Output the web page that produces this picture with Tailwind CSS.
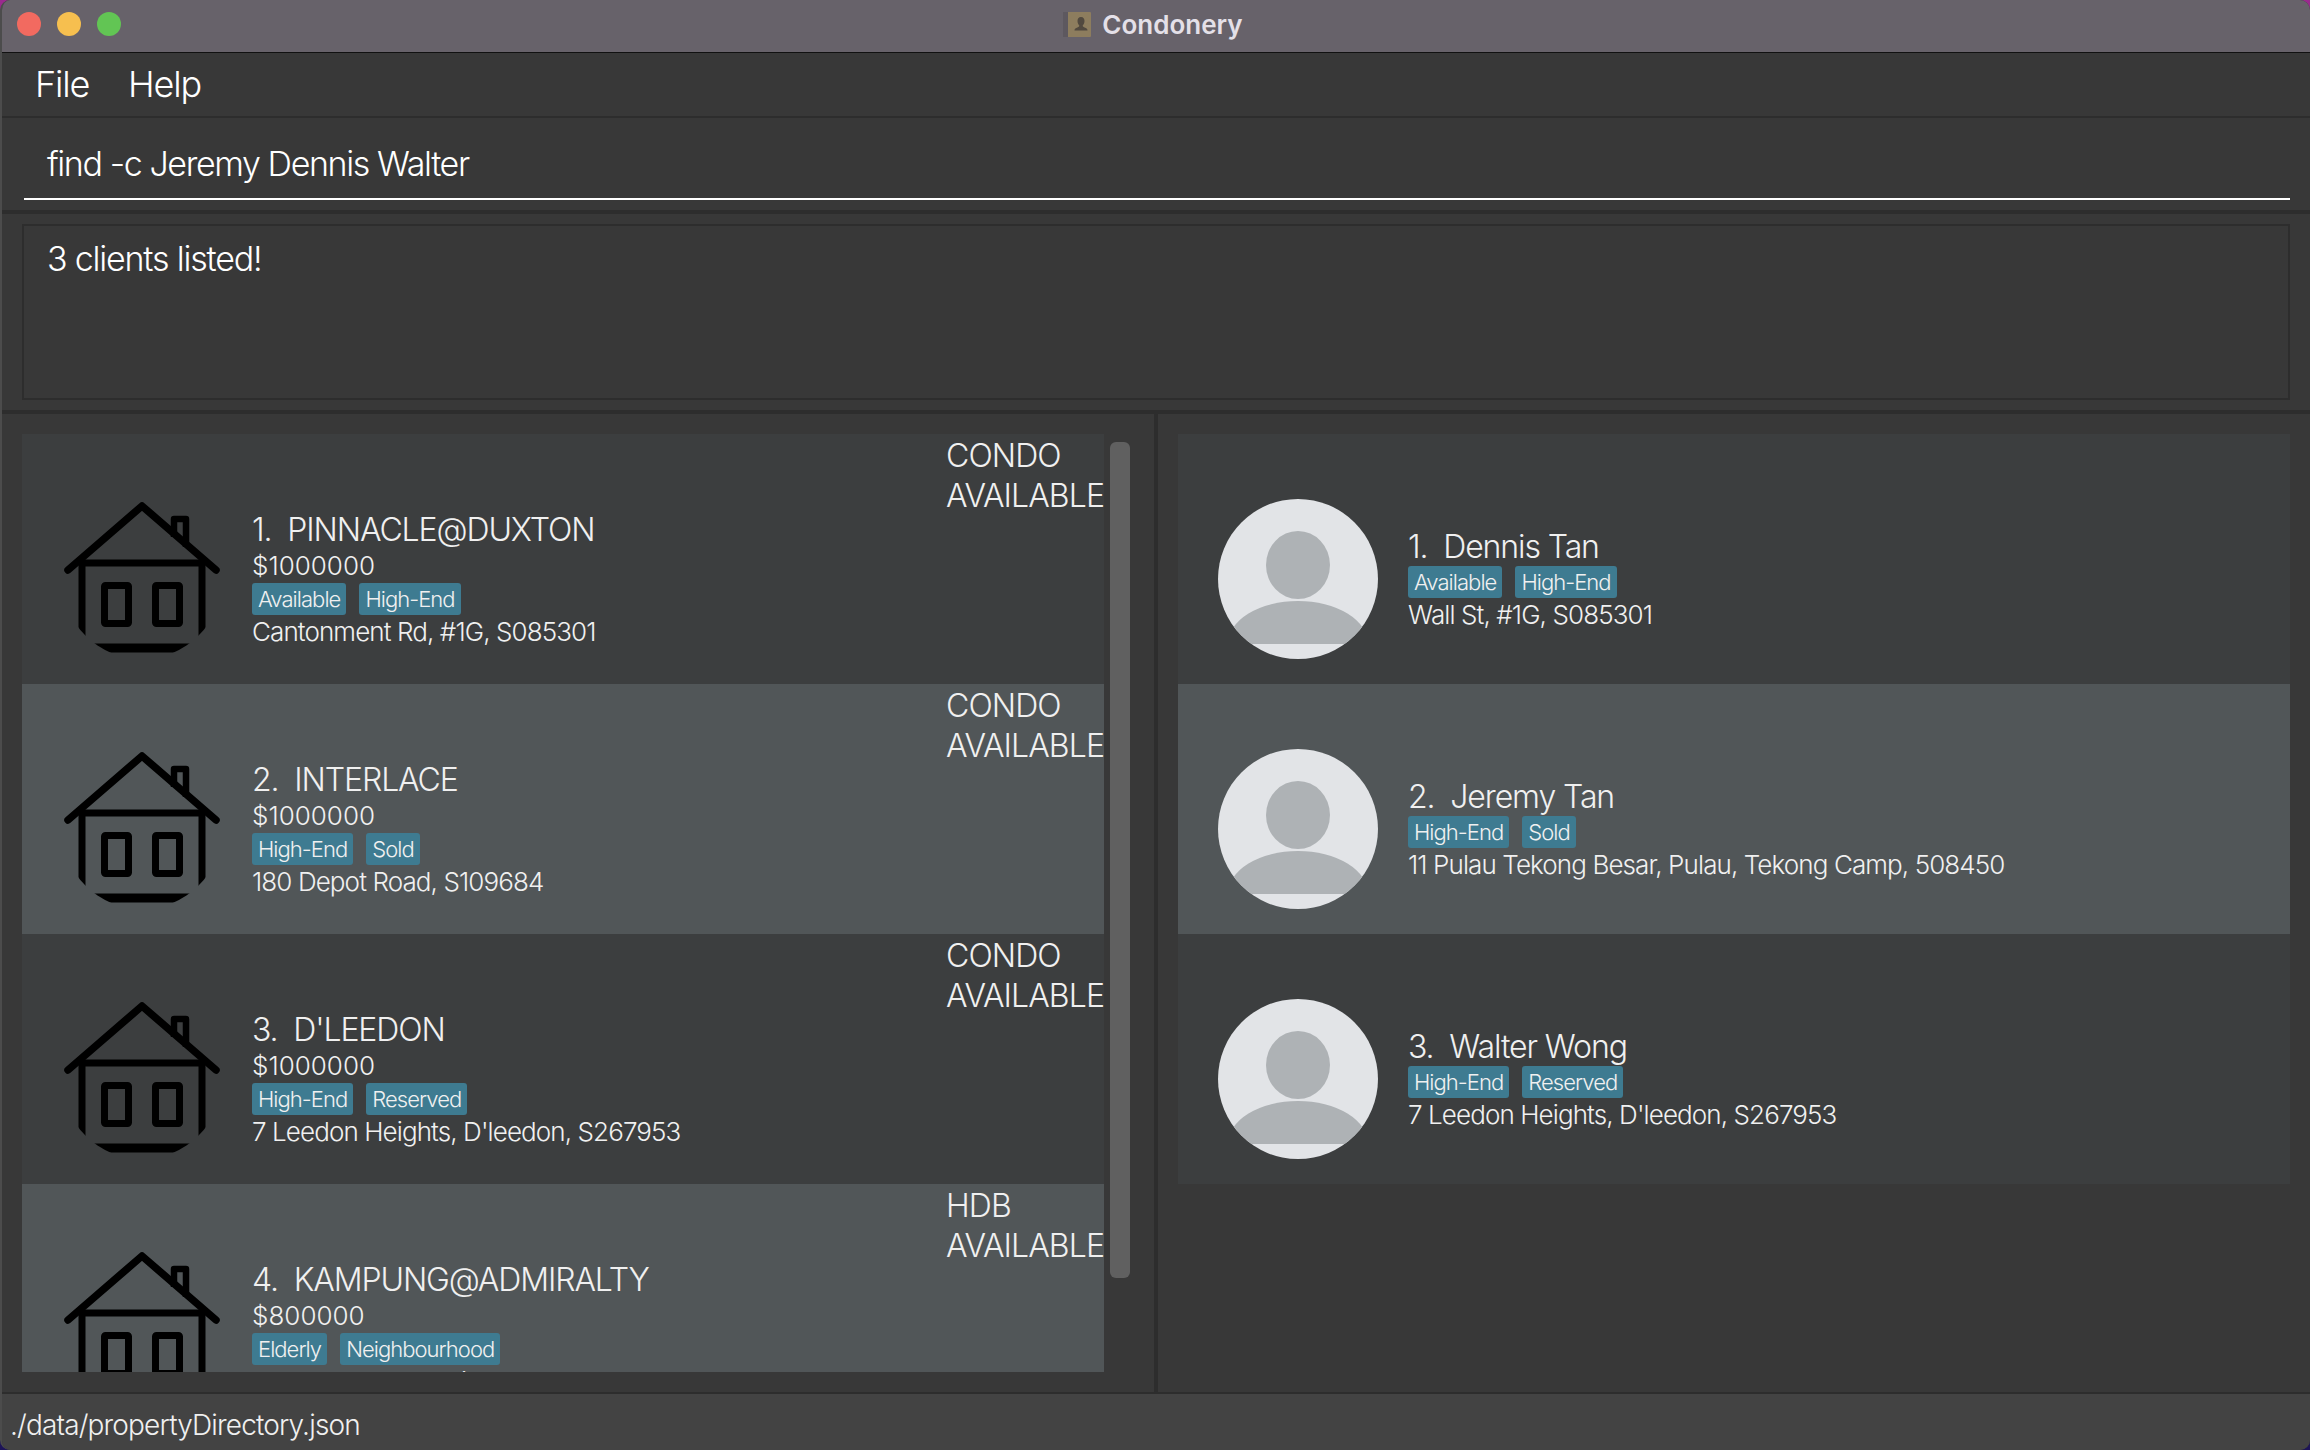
<!DOCTYPE html>
<html lang="en">
<head>
  <meta charset="UTF-8" />
  <title>Condonery</title>
  <script src="https://cdn.jsdelivr.net/npm/@tailwindcss/browser@4"></script>
</head>
<body class="h-[1450px] w-[2310px] overflow-hidden bg-linear-to-b from-[#9a2a8e] to-[#1d1458] font-['Inter','Noto_Sans',sans-serif] text-[#f0f0f0]">

  <svg class="absolute size-0">
    <defs>
      <clipPath id="round"><circle cx="80" cy="80" r="80"/></clipPath>
      <symbol id="house" viewBox="0 0 160 160">
        <g clip-path="url(#round)" fill="none" stroke="#000" stroke-width="7">
          <path d="M6 71 L80 7 L154 71" stroke-width="7.500" stroke-linecap="round" stroke-linejoin="round"/>
          <path d="M17 64 H143 M20 64 V170 M140 64 V170"/>
          <path d="M112 38 V20 H124 V48" stroke-width="6.500" stroke-linejoin="round"/>
          <rect x="42.500" y="86.500" width="24" height="38" rx="1"/>
          <rect x="93.500" y="86.500" width="24" height="38" rx="1"/>
          <path d="M10 149 H150" stroke-width="9"/>
        </g>
      </symbol>
      <symbol id="avatar" viewBox="0 0 160 160">
        <circle cx="80" cy="80" r="80" fill="#e2e4e7"/>
        <ellipse cx="80" cy="66" rx="32" ry="34" fill="#aeb2b5"/>
        <g clip-path="url(#round)"><path d="M10 145 A70 43 0 0 1 150 145 Z" fill="#aeb2b5"/></g>
      </symbol>
    </defs>
  </svg>

  <div class="flex h-[1450px] w-[2310px] flex-col overflow-hidden rounded-[10px] border-l-2 border-[#4c4c4c] bg-[#383838]">

    <!-- title bar -->
    <div class="relative flex h-[53px] shrink-0 items-center justify-center border-b border-[#111] bg-[#67626a] pb-[3px]">
      <div class="absolute left-[15px] top-[12px] flex gap-[16px]">
        <span class="size-[24px] rounded-full bg-[#f26a60]"></span>
        <span class="size-[24px] rounded-full bg-[#f6bf4f]"></span>
        <span class="size-[24px] rounded-full bg-[#62c554]"></span>
      </div>
      <div class="mr-[6px] flex items-center gap-[11px]">
        <svg width="28" height="25" viewBox="0 0 28 25">
          <rect width="28" height="25" rx="1" fill="#8d7d5e"/>
          <rect width="5" height="25" fill="#5d585f"/>
          <path d="M18 5c-2.500 0-3.500 2-3.500 4 0 2 1 3.500 1.800 4.500 0 1-.8 1.500-2.500 2.200-1.500.6-2.300 1.300-2.300 2.800h13c0-1.500-.8-2.200-2.300-2.800-1.700-.7-2.500-1.200-2.500-2.200.8-1 1.800-2.500 1.800-4.500 0-2-1-4-3.500-4z" fill="#51493f"/>
        </svg>
        <span class="text-[26px] leading-[32px] font-semibold text-[#e4e0e8]">Condonery</span>
      </div>
    </div>

    <!-- menu -->
    <div class="flex h-[65px] shrink-0 items-center gap-[39px] border-b-2 border-[#2d2d2d] pb-[2px] pl-[33px] text-[36px] font-light tracking-[-1.2px] text-white">
      <span>File</span>
      <span>Help</span>
    </div>

    <!-- command box -->
    <div class="h-[96px] shrink-0 border-b-4 border-[#2d2d2d] pl-[22px] pr-[20px]">
      <div class="h-[82px] border-b-2 border-white pl-[23px] pt-[25px] text-[34px] leading-[42px] font-light tracking-[-1.4px] text-white">find -c Jeremy Dennis Walter</div>
    </div>

    <!-- result box -->
    <div class="h-[200px] shrink-0 border-b-4 border-[#2d2d2d] pt-[10px] pr-[20px] pl-[20px]">
      <div class="h-[176px] border-2 border-[#2d2d2d] pt-[12px] pl-[23px] text-[34px] leading-[42px] font-light tracking-[-1.2px] text-white">3 clients listed!</div>
    </div>

    <!-- lists -->
    <div class="flex min-h-0 flex-1">
      <div class="relative w-[1156px] shrink-0 border-r-4 border-[#2d2d2d] pt-[20px] pl-[20px]">
        <div class="h-[938px] w-[1082px] overflow-hidden">

          <div class="flex h-[250px] bg-[#3c3e3f]">
            <svg class="mt-[65px] ml-[40px] size-[160px] shrink-0"><use href="#house"/></svg>
            <div class="mt-[76px] ml-[30px] flex-1">
              <div class="text-[32px] leading-[40px] font-light tracking-[-1.1px] whitespace-pre">1.  PINNACLE@DUXTON</div>
              <div class="text-[26px] leading-[32px] font-light">$1000000</div>
              <div class="mt-[1px] flex gap-[13px]">
                <span class="h-[32px] rounded-[3px] bg-[#3e7b91] px-[6px] text-[22px] leading-[32px] font-light tracking-[-0.95px]">Available</span>
                <span class="h-[32px] rounded-[3px] bg-[#3e7b91] px-[6px] text-[22px] leading-[32px] font-light tracking-[-0.95px]">High-End</span>
              </div>
              <div class="text-[26px] leading-[34px] font-light tracking-[-0.9px]">Cantonment Rd, #1G, S085301</div>
            </div>
            <div class="w-[158px] shrink-0 pt-[2px] text-[32px] leading-[40px] font-light tracking-[-0.9px] whitespace-nowrap">CONDO<br>AVAILABLE</div>
          </div>

          <div class="flex h-[250px] bg-[#515658]">
            <svg class="mt-[65px] ml-[40px] size-[160px] shrink-0"><use href="#house"/></svg>
            <div class="mt-[76px] ml-[30px] flex-1">
              <div class="text-[32px] leading-[40px] font-light tracking-[-1.1px] whitespace-pre">2.  INTERLACE</div>
              <div class="text-[26px] leading-[32px] font-light">$1000000</div>
              <div class="mt-[1px] flex gap-[13px]">
                <span class="h-[32px] rounded-[3px] bg-[#3e7b91] px-[6px] text-[22px] leading-[32px] font-light tracking-[-0.95px]">High-End</span>
                <span class="h-[32px] rounded-[3px] bg-[#3e7b91] px-[6px] text-[22px] leading-[32px] font-light tracking-[-0.95px]">Sold</span>
              </div>
              <div class="text-[26px] leading-[34px] font-light tracking-[-0.9px]">180 Depot Road, S109684</div>
            </div>
            <div class="w-[158px] shrink-0 pt-[2px] text-[32px] leading-[40px] font-light tracking-[-0.9px] whitespace-nowrap">CONDO<br>AVAILABLE</div>
          </div>

          <div class="flex h-[250px] bg-[#3c3e3f]">
            <svg class="mt-[65px] ml-[40px] size-[160px] shrink-0"><use href="#house"/></svg>
            <div class="mt-[76px] ml-[30px] flex-1">
              <div class="text-[32px] leading-[40px] font-light tracking-[-1.1px] whitespace-pre">3.  D'LEEDON</div>
              <div class="text-[26px] leading-[32px] font-light">$1000000</div>
              <div class="mt-[1px] flex gap-[13px]">
                <span class="h-[32px] rounded-[3px] bg-[#3e7b91] px-[6px] text-[22px] leading-[32px] font-light tracking-[-0.95px]">High-End</span>
                <span class="h-[32px] rounded-[3px] bg-[#3e7b91] px-[6px] text-[22px] leading-[32px] font-light tracking-[-0.95px]">Reserved</span>
              </div>
              <div class="text-[26px] leading-[34px] font-light tracking-[-0.9px]">7 Leedon Heights, D'leedon, S267953</div>
            </div>
            <div class="w-[158px] shrink-0 pt-[2px] text-[32px] leading-[40px] font-light tracking-[-0.9px] whitespace-nowrap">CONDO<br>AVAILABLE</div>
          </div>

          <div class="flex h-[250px] bg-[#515658]">
            <svg class="mt-[65px] ml-[40px] size-[160px] shrink-0"><use href="#house"/></svg>
            <div class="mt-[76px] ml-[30px] flex-1">
              <div class="text-[32px] leading-[40px] font-light tracking-[-1.1px] whitespace-pre">4.  KAMPUNG@ADMIRALTY</div>
              <div class="text-[26px] leading-[32px] font-light">$800000</div>
              <div class="mt-[1px] flex gap-[13px]">
                <span class="h-[32px] rounded-[3px] bg-[#3e7b91] px-[6px] text-[22px] leading-[32px] font-light tracking-[-0.95px]">Elderly</span>
                <span class="h-[32px] rounded-[3px] bg-[#3e7b91] px-[6px] text-[22px] leading-[32px] font-light tracking-[-0.95px]">Neighbourhood</span>
              </div>
              <div class="text-[26px] leading-[34px] font-light tracking-[-0.9px]">676 Woodlands Drive 71, S730676</div>
            </div>
            <div class="w-[158px] shrink-0 pt-[2px] text-[32px] leading-[40px] font-light tracking-[-0.9px] whitespace-nowrap">HDB<br>AVAILABLE</div>
          </div>

        </div>
        <!-- scrollbar -->
        <div class="absolute top-[28px] left-[1108px] h-[836px] w-[20px] rounded-[6px] bg-[#606060]"></div>
      </div>

      <div class="flex-1 pt-[20px] pr-[20px] pl-[20px]">
        <div class="flex h-[250px] bg-[#3c3e3f]">
          <svg class="mt-[65px] ml-[40px] size-[160px] shrink-0"><use href="#avatar"/></svg>
          <div class="mt-[93px] ml-[30px]">
            <div class="text-[32px] leading-[40px] font-light tracking-[-1.1px] whitespace-pre">1.  Dennis Tan</div>
            <div class="-mt-[1px] flex gap-[13px]">
              <span class="h-[32px] rounded-[3px] bg-[#3e7b91] px-[6px] text-[22px] leading-[32px] font-light tracking-[-0.95px]">Available</span>
              <span class="h-[32px] rounded-[3px] bg-[#3e7b91] px-[6px] text-[22px] leading-[32px] font-light tracking-[-0.95px]">High-End</span>
            </div>
            <div class="text-[26px] leading-[34px] font-light tracking-[-0.9px]">Wall St, #1G, S085301</div>
          </div>
        </div>
        <div class="flex h-[250px] bg-[#515658]">
          <svg class="mt-[65px] ml-[40px] size-[160px] shrink-0"><use href="#avatar"/></svg>
          <div class="mt-[93px] ml-[30px]">
            <div class="text-[32px] leading-[40px] font-light tracking-[-1.1px] whitespace-pre">2.  Jeremy Tan</div>
            <div class="-mt-[1px] flex gap-[13px]">
              <span class="h-[32px] rounded-[3px] bg-[#3e7b91] px-[6px] text-[22px] leading-[32px] font-light tracking-[-0.95px]">High-End</span>
              <span class="h-[32px] rounded-[3px] bg-[#3e7b91] px-[6px] text-[22px] leading-[32px] font-light tracking-[-0.95px]">Sold</span>
            </div>
            <div class="text-[26px] leading-[34px] font-light tracking-[-0.9px]">11 Pulau Tekong Besar, Pulau, Tekong Camp, 508450</div>
          </div>
        </div>
        <div class="flex h-[250px] bg-[#3c3e3f]">
          <svg class="mt-[65px] ml-[40px] size-[160px] shrink-0"><use href="#avatar"/></svg>
          <div class="mt-[93px] ml-[30px]">
            <div class="text-[32px] leading-[40px] font-light tracking-[-1.1px] whitespace-pre">3.  Walter Wong</div>
            <div class="-mt-[1px] flex gap-[13px]">
              <span class="h-[32px] rounded-[3px] bg-[#3e7b91] px-[6px] text-[22px] leading-[32px] font-light tracking-[-0.95px]">High-End</span>
              <span class="h-[32px] rounded-[3px] bg-[#3e7b91] px-[6px] text-[22px] leading-[32px] font-light tracking-[-0.95px]">Reserved</span>
            </div>
            <div class="text-[26px] leading-[34px] font-light tracking-[-0.9px]">7 Leedon Heights, D'leedon, S267953</div>
          </div>
        </div>
      </div>
    </div>

    <!-- status bar -->
    <div class="h-[58px] shrink-0 border-t-2 border-[#2d2d2d] bg-[#434343] pt-[11px] pl-[8px] text-[28px] leading-[40px] font-light tracking-[-0.85px]">./data/propertyDirectory.json</div>
  </div>

</body>
</html>
